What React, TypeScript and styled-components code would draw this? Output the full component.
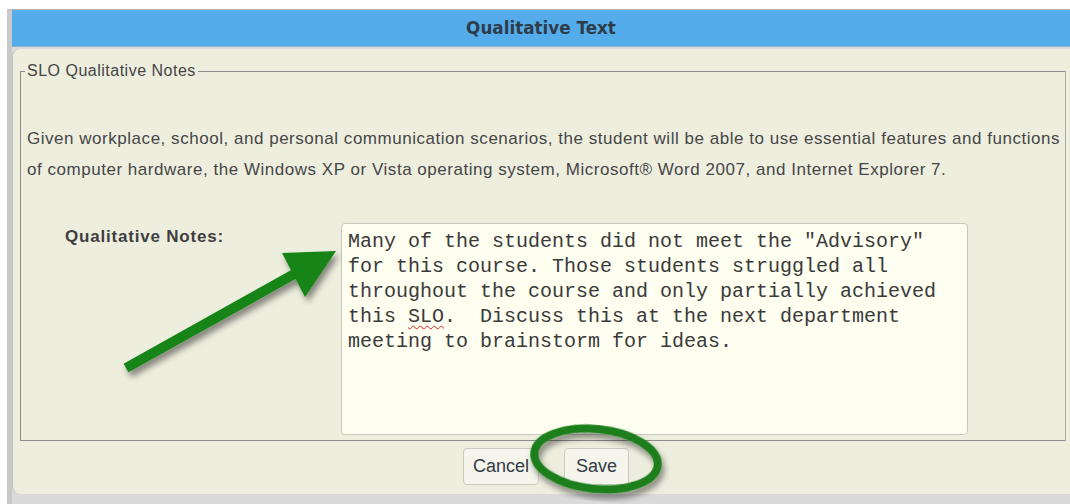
import styled, { createGlobalStyle } from "styled-components";

const GlobalStyle = createGlobalStyle`
    body {
        margin: 0;
        background: #ffffff;
        font-family: "Liberation Sans", Arial, sans-serif;
    }
`;

const Page = styled.div`
    position: relative;
    width: 1070px;
    height: 504px;
    overflow: hidden;
    padding-top: 9px;
    box-sizing: border-box;
`;

const Dialog = styled.div`
    margin-left: 7px;
    border-left: 5px solid #c9c9c9;
    border-top: 1px solid #b8b8b8;
    background: #dadada;
    height: 494px;
    display: flex;
    flex-direction: column;
`;

const TitleBar = styled.div`
    height: 36px;
    background: #55acea;
    display: flex;
    align-items: center;
    justify-content: center;
    font-family: "DejaVu Sans", Tahoma, sans-serif;
    font-weight: bold;
    font-size: 16.8px;
    color: #2e3c4a;
    border-bottom: 1px solid #8fb3cf;
`;

const Panel = styled.div`
    margin-top: 2px;
    height: 445px;
    background: #eeeedf;
    border-left: 1px solid #c2c2b8;
    border-radius: 8px 0 0 8px;
    padding: 0 4px 0 7px;
    box-sizing: border-box;
    display: flex;
    flex-direction: column;
`;

const Group = styled.fieldset`
    margin: 13px 0 0 0;
    padding: 0 6px 4px 6px;
    min-width: 0;
    border: 1px solid #8e8e8e;
    border-right-color: #a8a8a8;
    height: 379px;
    box-sizing: border-box;
    color: #454545;

    legend {
        padding: 0 2px;
        margin-left: -2px;
        font-size: 16px;
        letter-spacing: 0.5px;
        color: #444;
    }
`;

const Description = styled.p`
    margin: 43px 0 0 0;
    line-height: 31px;
    font-size: 17px;
    letter-spacing: 0.53px;
    color: #464646;
    white-space: nowrap;
`;

const NotesRow = styled.div`
    display: flex;
    margin-top: 38px;
`;

const NotesLabel = styled.label`
    width: 314px;
    padding-left: 38px;
    padding-top: 4px;
    box-sizing: border-box;
    font-weight: bold;
    font-size: 17px;
    letter-spacing: 0.8px;
    color: #3f3f3f;
`;

const NotesBox = styled.div`
    width: 627px;
    height: 212px;
    box-sizing: border-box;
    padding: 5px 6px;
    background: #fefef1;
    border: 1px solid #c8c8c0;
    border-radius: 4px;
    font-family: "Liberation Mono", "Courier New", monospace;
    font-size: 20px;
    line-height: 25px;
    color: #3a3a3a;
    white-space: pre-wrap;
`;

const Misspelled = styled.span`
    text-decoration: underline wavy #e02020;
    text-decoration-thickness: 1px;
    text-underline-offset: 3px;
`;

const ButtonBar = styled.div`
    flex: 1;
    display: flex;
    align-items: center;
    justify-content: center;
    gap: 25px;
    padding-left: 6px;
    padding-bottom: 2px;
`;

const Button = styled.button`
    height: 37px;
    padding: 0 ${(props: { $wide?: boolean }) => (props.$wide ? "9px" : "11px")};
    background: #f5f5ec;
    border: 1px solid #c9c9c0;
    border-radius: 4px;
    font-family: "Liberation Sans", Arial, sans-serif;
    font-size: 18px;
    color: #333a48;
`;

const Overlay = styled.svg`
    position: absolute;
    left: 0;
    top: 0;
    pointer-events: none;
`;

export default function App() {
    return (
        <Page>
            <GlobalStyle />
            <Dialog>
                <TitleBar>Qualitative Text</TitleBar>
                <Panel>
                    <Group>
                        <legend>SLO Qualitative Notes</legend>
                        <Description>
                            Given workplace, school, and personal communication scenarios, the student will be able to use essential features and functions
                            <br />
                            of computer hardware, the Windows XP or Vista operating system, Microsoft® Word 2007, and Internet Explorer 7.
                        </Description>
                        <NotesRow>
                            <NotesLabel>Qualitative Notes:</NotesLabel>
                            <NotesBox>
                                {"Many of the students did not meet the \"Advisory\"\nfor this course. Those students struggled all\nthroughout the course and only partially achieved\nthis "}
                                <Misspelled>SLO</Misspelled>
                                {".  Discuss this at the next department\nmeeting to brainstorm for ideas."}
                            </NotesBox>
                        </NotesRow>
                    </Group>
                    <ButtonBar>
                        <Button $wide>Cancel</Button>
                        <Button>Save</Button>
                    </ButtonBar>
                </Panel>
            </Dialog>

            {/* green callout arrow and circle drawn over the dialog */}
            <Overlay width="1070" height="504" viewBox="0 0 1070 504">
                <defs>
                    <filter id="shade" x="-20%" y="-20%" width="140%" height="140%">
                        <feDropShadow dx="3" dy="5" stdDeviation="3" floodColor="#000" floodOpacity="0.45" />
                    </filter>
                </defs>
                <g filter="url(#shade)">
                    <line x1="126" y1="368" x2="296" y2="273" stroke="#138413" strokeWidth="10" />
                    <polygon points="282,253 336,251 305,297" fill="#138413" />
                </g>
                <ellipse
                    cx="596"
                    cy="459"
                    rx="62"
                    ry="30"
                    fill="none"
                    stroke="#1d7f1a"
                    strokeWidth="8"
                    transform="rotate(6 596 459)"
                    filter="url(#shade)"
                />
            </Overlay>
        </Page>
    );
}
